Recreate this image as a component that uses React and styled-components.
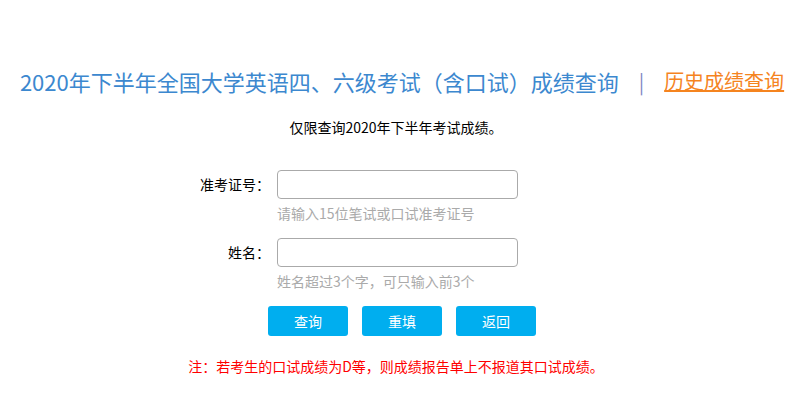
import styled, { createGlobalStyle } from "styled-components";

const GlobalStyle = createGlobalStyle`
    body{
        margin: 0;
        background: #fff;
        font-family: "Noto Sans CJK SC", "Liberation Sans", sans-serif;
        color: #000;
    }
`

const fields = [
    { label: "准考证号：", hint: "请输入15位笔试或口试准考证号" },
    { label: "姓名：", hint: "姓名超过3个字，可只输入前3个" },
];

const buttons = ["查询", "重填", "返回"];

const App = () => {
    return (
        <>
            <GlobalStyle />
            <Page>
                <TitleRow>
                    <Title>2020年下半年全国大学英语四、六级考试（含口试）成绩查询</Title>
                    <Divider>|</Divider>
                    <HistoryLink href="#">历史成绩查询</HistoryLink>
                </TitleRow>
                <SubTitle>仅限查询2020年下半年考试成绩。</SubTitle>
                <Form>
                    {fields.map((f) => (
                        <FieldRow key={f.label}>
                            <Label>{f.label}</Label>
                            <FieldCol>
                                <Input type="text" />
                                <Hint>{f.hint}</Hint>
                            </FieldCol>
                        </FieldRow>
                    ))}
                    <ButtonRow>
                        {buttons.map((b) => (
                            <Button key={b} type="button">{b}</Button>
                        ))}
                    </ButtonRow>
                </Form>
                <Note>注：若考生的口试成绩为D等，则成绩报告单上不报道其口试成绩。</Note>
            </Page>
        </>
    )
}
export default App;

const Page = styled.div`
    width: 792px;
    padding-top: 66px;
`
const TitleRow = styled.div`
    display: flex;
    justify-content: center;
    align-items: center;
    height: 30px;
    padding-left: 12px;
`
const Title = styled.div`
    font-size: 22px;
    line-height: 30px;
    color: #3c88cf;
    white-space: nowrap;
`
const Divider = styled.span`
    margin: 0 20px;
    font-size: 20px;
    color: #8088c4;
`
const HistoryLink = styled.a`
    font-size: 20px;
    line-height: 30px;
    color: #f5841f;
    text-decoration: underline;
    white-space: nowrap;
`
const SubTitle = styled.div`
    margin-top: 21px;
    text-align: center;
    font-size: 14px;
    line-height: 20px;
`
const Form = styled.div`
    margin-top: 33px;
`
const FieldRow = styled.div`
    display: flex;
    align-items: flex-start;
    margin-bottom: 15px;
`
const Label = styled.div`
    width: 270px;
    padding-right: 0;
    text-align: right;
    font-size: 14px;
    line-height: 29px;
    box-sizing: border-box;
`
const FieldCol = styled.div`
    display: flex;
    flex-direction: column;
    margin-left: 7px;
`
const Input = styled.input`
    width: 241px;
    height: 29px;
    box-sizing: border-box;
    border: 1px solid #aaa;
    border-radius: 4px;
    outline: none;
    padding: 0 8px;
`
const Hint = styled.div`
    margin-top: 4px;
    font-size: 14px;
    line-height: 20px;
    color: #aaa;
`
const ButtonRow = styled.div`
    display: flex;
    gap: 14px;
    padding-left: 268px;
`
const Button = styled.button`
    width: 80px;
    height: 30px;
    border: none;
    border-radius: 3px;
    background: #00aeef;
    color: #fff;
    font-family: "Noto Sans CJK SC", sans-serif;
    font-size: 14px;
    cursor: pointer;
`
const Note = styled.div`
    margin-top: 20px;
    text-align: center;
    font-size: 14px;
    line-height: 20px;
    color: #f00;
`
